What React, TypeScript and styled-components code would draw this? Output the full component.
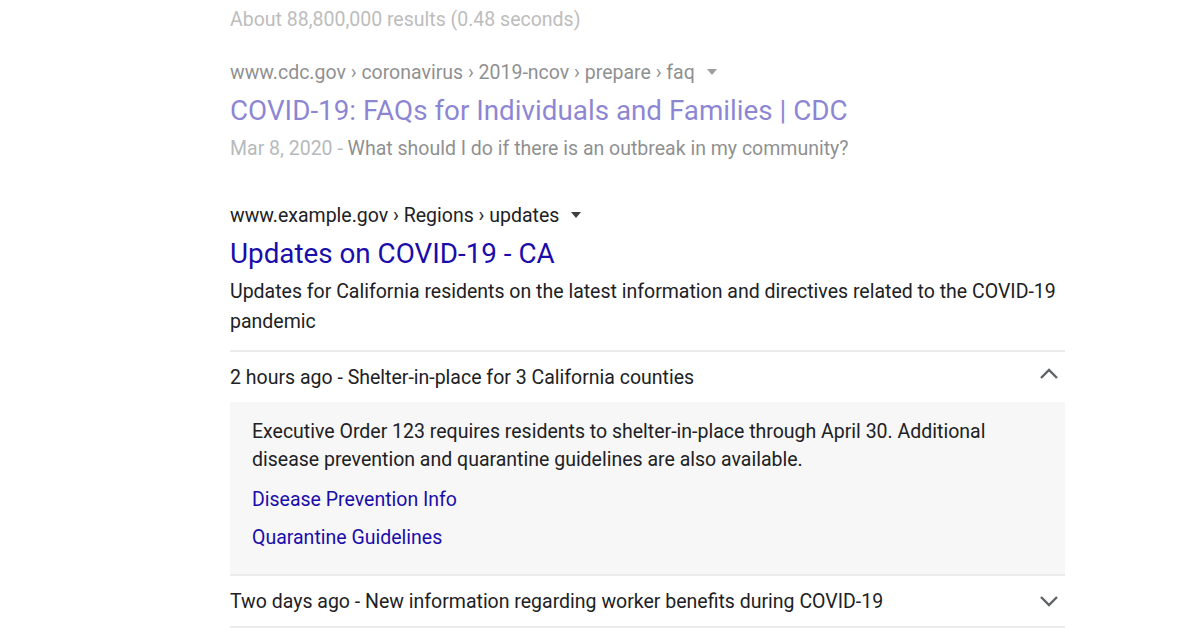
import React from 'react';
import styled, { createGlobalStyle } from 'styled-components';

const GlobalStyle = createGlobalStyle`
  body {
    margin: 0;
    background: #fff;
    font-family: Roboto, "Liberation Sans", Arial, sans-serif;
  }
`;

const Page = styled.div`
  width: 1200px;
  height: 630px;
  overflow: hidden;
  padding-left: 230px;
  box-sizing: border-box;
`;

const Column = styled.div`
  width: 835px;
`;

const Stats = styled.div`
  font-size: 19.5px;
  line-height: 26px;
  color: #bdbdbd;
  padding-top: 7px;
  margin-bottom: 27px;
`;

const Result = styled.div<{ faded?: boolean }>`
  opacity: ${({ faded }) => (faded ? 0.5 : 1)};
  margin-bottom: 39px;
`;

const Crumbs = styled.div`
  display: flex;
  align-items: center;
  gap: 12px;
  font-size: 19.5px;
  line-height: 26px;
  color: #202124;
`;

const Caret = styled.span`
  width: 0;
  height: 0;
  border-left: 5px solid transparent;
  border-right: 5px solid transparent;
  border-top: 6px solid #3c4043;
  margin-top: -3px;
`;

const Title = styled.a`
  display: block;
  font-size: 27.8px;
  line-height: 36px;
  margin-top: 7px;
  color: #1a0dab;
  text-decoration: none;
`;

const Snippet = styled.div`
  font-size: 19.5px;
  line-height: 30px;
  color: #202124;
  margin-top: 5px;
`;

const DateText = styled.span`
  color: #70757a;
`;

const Accordion = styled.div`
  margin-top: 13px;
  border-top: 2px solid #ebebeb;
`;

const Row = styled.div<{ last?: boolean }>`
  display: flex;
  align-items: center;
  justify-content: space-between;
  height: 50px;
  font-size: 19.5px;
  color: #202124;
  border-bottom: ${({ last }) => (last ? '2px solid #ebebeb' : 'none')};
`;

const Chevron = styled.svg`
  width: 24px;
  height: 24px;
  margin-right: 4px;
  fill: none;
  stroke: #5f6368;
  stroke-width: 2.4;
`;

const Panel = styled.div`
  background: #f7f7f7;
  padding: 16px 22px 24px;
  border-bottom: 2px solid #ebebeb;
`;

const PanelText = styled.p`
  margin: 0;
  font-size: 19.5px;
  line-height: 28px;
  color: #202124;
`;

const PanelLink = styled.a`
  display: block;
  font-size: 19.5px;
  line-height: 24px;
  color: #1a0dab;
  text-decoration: none;
  margin-top: 14px;
`;

const Up = () => (
  <Chevron viewBox="0 0 24 24">
    <path d="M4 13l8-8 8 8" />
  </Chevron>
);

const Down = () => (
  <Chevron viewBox="0 0 24 24">
    <path d="M4 8l8 8 8-8" />
  </Chevron>
);

export default function App() {
  return (
    <Page>
      <GlobalStyle />
      <Column>
        <Stats>About 88,800,000 results (0.48 seconds)</Stats>

        <Result faded>
          <Crumbs>
            www.cdc.gov › coronavirus › 2019-ncov › prepare › faq <Caret />
          </Crumbs>
          <Title href="#">COVID-19: FAQs for Individuals and Families | CDC</Title>
          <Snippet>
            <DateText>Mar 8, 2020 - </DateText>What should I do if there is an outbreak in my community?
          </Snippet>
        </Result>

        <div>
          <Crumbs>
            www.example.gov › Regions › updates <Caret />
          </Crumbs>
          <Title href="#">Updates on COVID-19 - CA</Title>
          <Snippet>
            Updates for California residents on the latest information and directives related to the COVID-19
            pandemic
          </Snippet>
          <Accordion>
            <Row>
              <span>2 hours ago - Shelter-in-place for 3 California counties</span>
              <Up />
            </Row>
            <Panel>
              <PanelText>
                Executive Order 123 requires residents to shelter-in-place through April 30. Additional
                disease prevention and quarantine guidelines are also available.
              </PanelText>
              <PanelLink href="#">Disease Prevention Info</PanelLink>
              <PanelLink href="#">Quarantine Guidelines</PanelLink>
            </Panel>
            <Row last>
              <span>Two days ago - New information regarding worker benefits during COVID-19</span>
              <Down />
            </Row>
          </Accordion>
        </div>
      </Column>
    </Page>
  );
}
